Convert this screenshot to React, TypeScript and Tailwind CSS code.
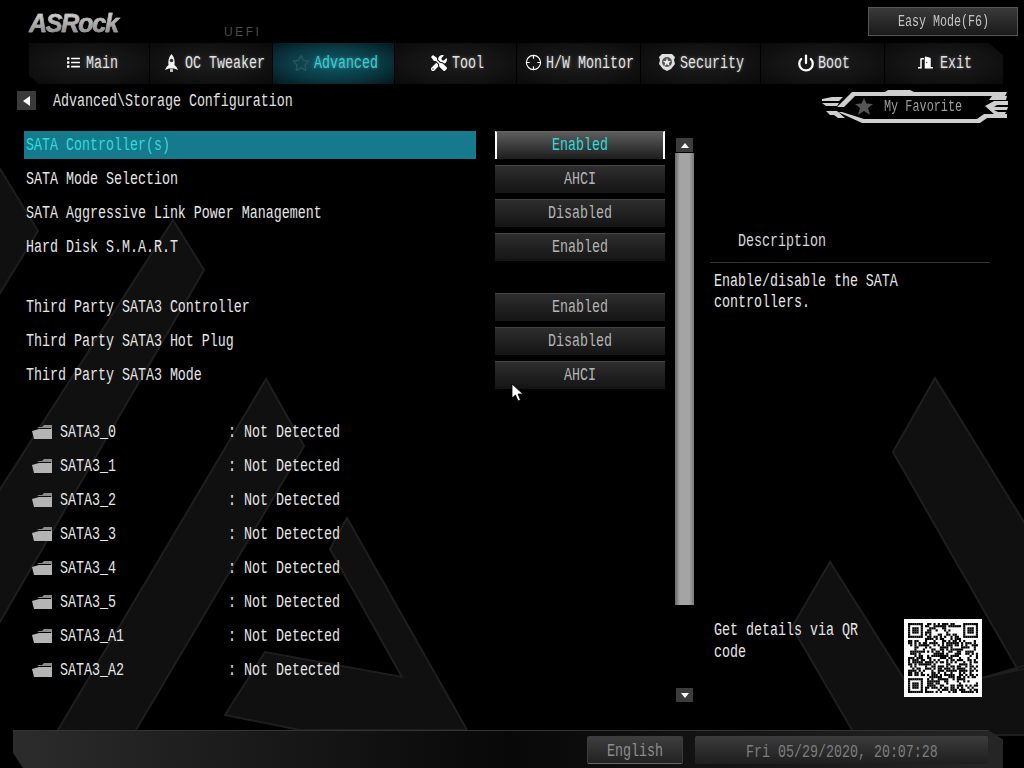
import React from "react";
import { Crosshair, Power } from "lucide-react";
import { FaList, FaTools, FaRegStar, FaDoorOpen } from "react-icons/fa";

function T({ text, w = 8, cls = "" }: { text: string; w?: number; cls?: string }) {
  return (
    <span className="inline-block whitespace-nowrap shrink-0" style={{ width: text.length * w }}>
      <span className={"inline-block origin-left " + cls}>{text}</span>
    </span>
  );
}
const big = "text-[18px] leading-[22px] scale-x-[0.74] translate-y-[1px]";

function Seg({ w, label, icon, active, shape, cls = "gap-[6px]" }: { w: number; label: string; icon: React.ReactNode; active?: boolean; shape?: string; cls?: string }) {
  return (
    <div
      className={
        "h-[41px] flex items-center justify-center shrink-0 pb-[2px] " + cls + " " +
        (active
          ? "bg-[radial-gradient(ellipse_at_center,#0e5a66_0%,#0a3a44_55%,#04171c_100%)] text-[#2fd3d3] "
          : "bg-[radial-gradient(ellipse_at_center,#1c1c1c_0%,#141414_50%,#0a0a0a_100%)] text-[#e4e4e4] ") +
        (shape || "")
      }
      style={{ width: w }}
    >
      {icon}
      <T text={label} cls={big + " [text-shadow:0_0_4px_rgba(255,255,255,0.35)]"} />
    </div>
  );
}

function Row({ label, value, selected }: { label: string; value: string; selected?: boolean }) {
  return (
    <div className="flex h-[28px] mb-[6px] items-center">
      <div className={"w-[452px] h-[28px] flex items-center pl-[2px] " + (selected ? "bg-[#147a8c] text-[#2fdcdc]" : "text-[#e6e6e6]")}>
        <T text={label} cls={big} />
      </div>
      <div
        className={
          "ml-[19px] w-[170px] h-[28px] -mt-[1px] flex items-center justify-center border-t " +
          (selected
            ? "bg-gradient-to-b from-[#5e5e5e] to-[#1e1e1e] border-[#666] border-x-2 border-x-white text-[#2fdcdc]"
            : "bg-gradient-to-b from-[#2e2e2e] to-[#141414] border-[#444] text-[#b4b4b4]")
        }
      >
        <T text={value} cls={big} />
      </div>
    </div>
  );
}

function Folder() {
  return (
    <svg width="22" height="16" viewBox="0 0 22 16" className="shrink-0">
      <path d="M6 3 L11 3 L13 1 L21 1 L21 14 L20 14 L20 4 L8 4 Z" fill="#8c8c8c" />
      <path d="M1 7 L8 5 L21 5 L21 15 L3 15 Z" fill="#b4b4b4" />
    </svg>
  );
}

function Drive({ name }: { name: string }) {
  return (
    <div className="flex items-center h-[34px] text-[#e6e6e6]">
      <div className="ml-[7px] w-[29px]">
        <Folder />
      </div>
      <div className="w-[168px]">
        <T text={name} cls={big} />
      </div>
      <T text=": Not Detected" cls={big} />
    </div>
  );
}

function Qr() {
  const n = 33;
  const cells: React.ReactNode[] = [];
  const inF = (x: number, y: number, ox: number, oy: number) => x >= ox - 1 && x <= ox + 7 && y >= oy - 1 && y <= oy + 7;
  let seed = 12345;
  for (let y = 0; y < n; y++) {
    for (let x = 0; x < n; x++) {
      seed = (seed * 1103515245 + 12345) & 0x7fffffff;
      const r = (seed >> 16) % 100;
      let on = r < 52;
      const f = [[0, 0], [26, 0], [0, 26]].find(([a, b]) => inF(x, y, a, b));
      if (f) {
        const u = x - f[0];
        const v = y - f[1];
        on = u >= 0 && u <= 6 && v >= 0 && v <= 6 && (u === 0 || u === 6 || v === 0 || v === 6 || (u >= 2 && u <= 4 && v >= 2 && v <= 4));
      }
      if (on) cells.push(<rect key={x + "-" + y} x={x} y={y} width="1.02" height="1.02" fill="#000" />);
    }
  }
  return (
    <div className="w-[78px] h-[78px] bg-white flex items-center justify-center shrink-0">
      <svg width="70" height="70" viewBox="0 0 33 33">{cells}</svg>
    </div>
  );
}

function Favorite() {
  return (
    <div className="relative w-[186px] h-[34px] mr-[16px] mt-[6px]">
      <svg width="186" height="34" viewBox="0 0 186 34" className="absolute inset-0">
        <g fill="#cfcfcf">
          <polygon points="30,2 63,2 66,0 88,0 92,2 185,2 183,6 33,6 22,17 15,17" />
          <polygon points="0,9 10,7 21,7 17,11 0,11" />
          <polygon points="0,13 17,13 15,16 4,16" />
          <polygon points="4,21 15,21 23,28 16,28 12,25 8,25" />
          <polygon points="16,22 20,22 42,29 155,29 162,24 185,24 185,28 165,28 158,33 40,33" />
          <polygon points="170,6 185,6 184,10 167,10" />
          <polygon points="163,16 172,11 186,11 186,15 175,15 172,17 186,17 185,20 172,20 176,22 184,22 183,24 172,24" />
        </g>
        <polygon points="42,8 44.5,13.5 51,14 46,18 48,25 42,21 36,25 38,18 33,14 39.5,13.5" fill="#555" />
      </svg>
      <div className="absolute left-[62px] top-[5px] text-[#9c9c9c]">
        <T text="My Favorite" w={7.1} cls="text-[16px] leading-[22px] scale-x-[0.74]" />
      </div>
    </div>
  );
}

function Rocket() {
  return (
    <svg width="15" height="18" viewBox="0 0 15 18" className="shrink-0">
      <path d="M7.5 0 C10.5 3 11 7 10.5 11 L12.5 13 L14 16 L10 14.5 L5 14.5 L1 16 L2.5 13 L4.5 11 C4 7 4.5 3 7.5 0 Z" fill="#f2f2f2" />
      <circle cx="7.5" cy="6.5" r="1.8" fill="#333" />
      <rect x="6" y="15" width="3" height="3" fill="#bbb" />
    </svg>
  );
}

function Badge() {
  return (
    <svg width="16" height="17" viewBox="0 0 16 17" className="shrink-0">
      <path d="M3 0 L13 0 L16 3 L15 6 L16 10 L12 15 L8 17 L4 15 L0 10 L1 6 L0 3 Z" fill="#e0e0e0" />
      <circle cx="8" cy="8" r="5" fill="#555" />
      <polygon points="8,4 9.2,7 12,7 9.8,9 10.6,12 8,10.2 5.4,12 6.2,9 4,7 6.8,7" fill="#e8e8e8" />
    </svg>
  );
}

export default function App() {
  const drives = ["SATA3_0", "SATA3_1", "SATA3_2", "SATA3_3", "SATA3_4", "SATA3_5", "SATA3_A1", "SATA3_A2"];
  return (
    <div className="relative w-[1024px] h-[768px] bg-black overflow-hidden flex flex-col font-['Liberation_Mono',monospace]">
      <svg width="1024" height="768" viewBox="0 0 1024 768" className="absolute inset-0">
        <g fill="#101010" stroke="#1e1e1e" strokeWidth="2">
          <polygon points="-3,164 38,231 -3,298" />
          <polygon points="173,220 204,270 -3,627 -3,494" />
          <polygon points="266,379 304,446 133,735 55,735" />
          <polygon points="347,518 467,730 300,730 225,715 265,652 402,677 330,549" />
          <polygon points="935,378 1027,527 1027,665 982,678 1018,670 893,452" />
          <polygon points="830,562 792,627 855,735 1027,735 1027,668 982,678 913,693" />
        </g>
      </svg>

      <div className="relative flex h-[43px] shrink-0">
        <div className="ml-[29px] mt-[7px] w-[150px] h-[30px] text-[25px] leading-[32px] font-bold italic font-['Liberation_Sans',sans-serif] tracking-[-1.2px] [-webkit-text-stroke:0.5px_#aaa] text-transparent bg-clip-text bg-gradient-to-b from-[#e8e8e8] to-[#808080]">
          ASRock
        </div>
        <div className="ml-[45px] mt-[24px] h-[16px] text-[12px] leading-[16px] tracking-[2.5px] text-[#4c4c4c] font-['Liberation_Sans',sans-serif]">UEFI</div>
        <div className="ml-auto mr-[6px] mt-[7px] w-[150px] h-[29px] border border-[#555] bg-gradient-to-b from-[#3a3a3a] to-[#1a1a1a] flex items-center justify-center text-[#c4c4c4]">
          <T text="Easy Mode(F6)" w={7} cls="text-[16px] leading-[22px] scale-x-[0.73]" />
        </div>
      </div>

      <div className="relative flex gap-[1px] ml-[29px] w-[974px] h-[41px] shrink-0">
        <Seg w={120} label="Main" cls="gap-[6px] pl-[6px]" shape="[clip-path:polygon(0_0,100%_0,100%_100%,8%_100%,0_80%)]" icon={<FaList className="text-white" size={13} />} />
        <Seg w={122} label="OC Tweaker" cls="gap-[6px] pl-[6px]" icon={<Rocket />} />
        <Seg w={121} label="Advanced" active cls="gap-[4px] pl-[2px]" icon={<FaRegStar className="text-[#2c5258]" size={18} />} />
        <Seg w={121} label="Tool" cls="gap-[5px] pl-[4px]" icon={<FaTools className="text-white" size={16} />} />
        <Seg w={123} label="H/W Monitor" cls="gap-[4px] pl-[2px]" icon={<Crosshair className="text-white" size={17} strokeWidth={1.6} />} />
        <Seg w={119} label="Security" cls="gap-[5px] pl-[2px]" icon={<Badge />} />
        <Seg w={123} label="Boot" cls="gap-[3px] pl-[1px]" icon={<Power className="text-white" size={18} strokeWidth={3} />} />
        <Seg w={118} label="Exit" cls="gap-[7px] pl-[2px]" shape="[clip-path:polygon(0_0,88%_0,100%_30%,100%_100%,0_100%)]" icon={<FaDoorOpen className="text-white -scale-x-100" size={15} />} />
      </div>

      <div className="relative flex h-[47px] shrink-0">
        <div className="ml-[17px] mt-[7px] w-[19px] h-[19px] bg-[#3a3a3a] flex items-center justify-center">
          <div className="w-0 h-0 border-y-[5px] border-y-transparent border-r-[7px] border-r-white" />
        </div>
        <div className="ml-[17px] mt-[5px] h-[22px] text-[#e0e0e0]">
          <T text="Advanced\Storage Configuration" cls={big} />
        </div>
        <div className="ml-auto">
          <Favorite />
        </div>
      </div>

      <div className="relative flex flex-1 min-h-0">
        <div className="ml-[24px] w-[641px] shrink-0">
          <Row label="SATA Controller(s)" value="Enabled" selected />
          <Row label="SATA Mode Selection" value="AHCI" />
          <Row label="SATA Aggressive Link Power Management" value="Disabled" />
          <Row label="Hard Disk S.M.A.R.T" value="Enabled" />
          <div className="h-[26px]" />
          <Row label="Third Party SATA3 Controller" value="Enabled" />
          <Row label="Third Party SATA3 Hot Plug" value="Disabled" />
          <Row label="Third Party SATA3 Mode" value="AHCI" />
          <div className="h-[20px]" />
          {drives.map((d) => (
            <Drive key={d} name={d} />
          ))}
        </div>

        <div className="ml-[10px] mt-[7px] w-[19px] h-[564px] flex flex-col items-center shrink-0">
          <div className="w-[17px] h-[14px] bg-[#3c3c3c] flex items-center justify-center shrink-0">
            <div className="w-0 h-0 border-x-[4px] border-x-transparent border-b-[5px] border-b-white" />
          </div>
          <div className="mt-[1px] w-[19px] h-[452px] bg-[linear-gradient(90deg,#666,#a4a4a4_25%,#a4a4a4_75%,#777)] shrink-0" />
          <div className="mt-auto w-[17px] h-[14px] bg-[#3c3c3c] flex items-center justify-center shrink-0">
            <div className="w-0 h-0 border-x-[4px] border-x-transparent border-t-[5px] border-t-white" />
          </div>
        </div>

        <div className="ml-[16px] w-[280px] h-[566px] flex flex-col shrink-0">
          <div className="mt-[97px] h-[35px] pl-[28px] pt-[1px] border-b border-[#333] text-[#d8d8d8]">
            <T text="Description" cls={big} />
          </div>
          <div className="pl-[4px] mt-[6px] flex flex-col text-[#e6e6e6]">
            <div className="h-[21px]"><T text="Enable/disable the SATA" cls={big} /></div>
            <div className="h-[21px]"><T text="controllers." cls={big} /></div>
          </div>
          <div className="mt-auto pl-[4px] flex items-start text-[#e6e6e6]">
            <div className="w-[190px] -mt-[1px] flex flex-col">
              <div className="h-[22px]"><T text="Get details via QR" cls={big} /></div>
              <div className="h-[22px]"><T text="code" cls={big} /></div>
            </div>
            <Qr />
          </div>
        </div>
      </div>

      <div className="relative mt-auto ml-[13px] w-[990px] h-[38px] shrink-0 border-t border-[#333] bg-gradient-to-r from-[#2c2c2c] via-[#080808] to-[#262626] [clip-path:polygon(0_0,98.5%_0,100%_25%,100%_100%,1%_100%,0_60%)] flex items-center">
        <div className="ml-[574px] w-[96px] h-[28px] pt-[2px] rounded-[2px] border border-[#3c3c3c] border-b-[#666] bg-gradient-to-b from-[#3e3e3e] to-[#222] flex items-center justify-center text-[#8e8e8e]">
          <T text="English" cls={big} />
        </div>
        <div className="ml-[12px] w-[293px] h-[28px] pt-[5px] rounded-[2px] bg-gradient-to-b from-[#3c3c3c] to-[#1e1e1e] flex items-center justify-center text-[#7e7e7e]">
          <T text="Fri 05/29/2020, 20:07:28" cls={big} />
        </div>
      </div>

      <svg width="14" height="20" viewBox="0 0 14 20" className="absolute left-[511px] top-[383px]">
        <path d="M1 1 L1 15 L4.5 12 L7 18 L9.5 17 L7 11 L12 11 Z" fill="#fff" stroke="#000" strokeWidth="0.8" />
      </svg>
    </div>
  );
}
